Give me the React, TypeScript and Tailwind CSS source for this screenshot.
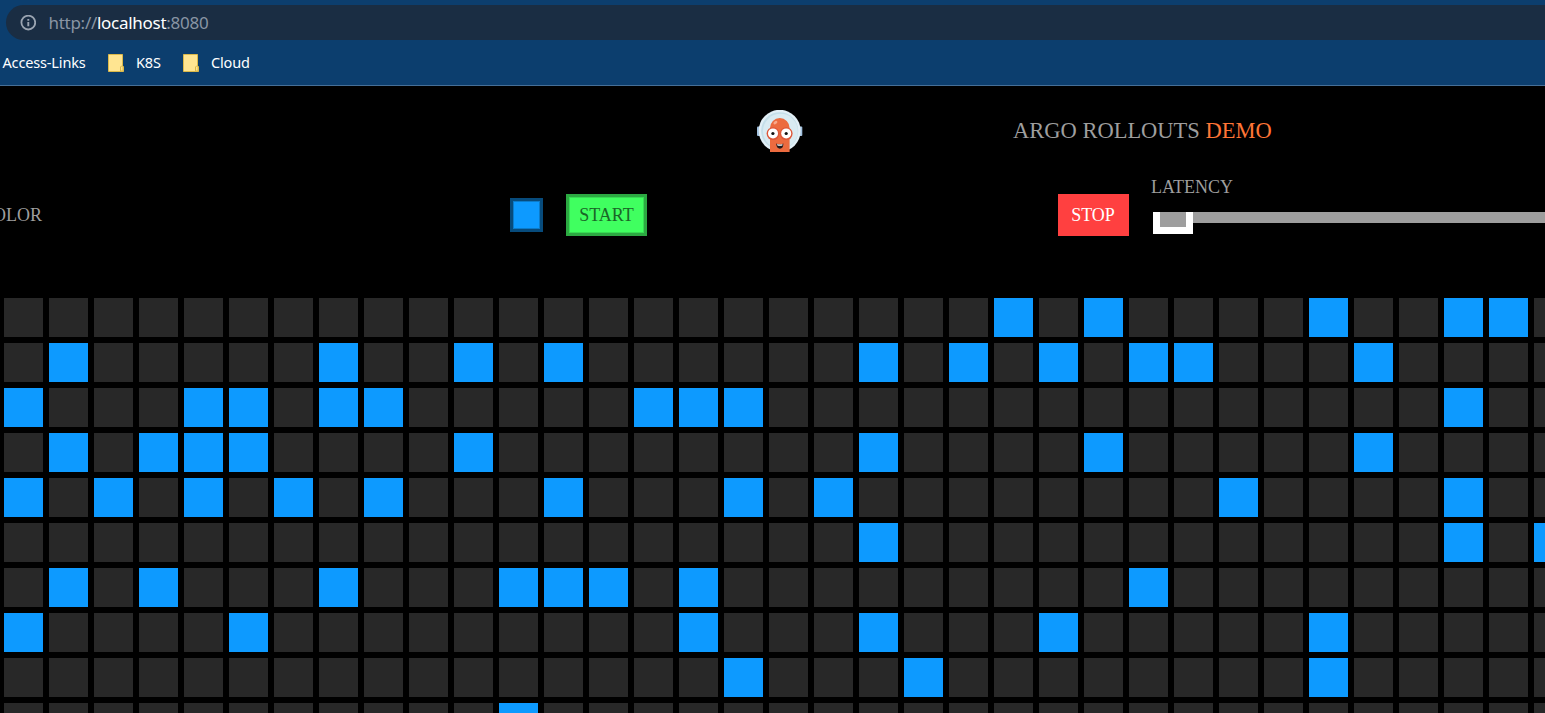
const COLUMNS = 35;

const ACTIVE: number[][] = [
  [22, 24, 29, 32, 33],
  [1, 7, 10, 12, 19, 21, 23, 25, 26, 30],
  [0, 4, 5, 7, 8, 14, 15, 16, 32],
  [1, 3, 4, 5, 10, 19, 24, 30],
  [0, 2, 4, 6, 8, 12, 16, 18, 27, 32],
  [19, 32, 34],
  [1, 3, 7, 11, 12, 13, 15, 25],
  [0, 5, 15, 19, 23, 29],
  [16, 20, 29],
  [11],
];

function InfoIcon() {
  return (
    <svg className="size-4 shrink-0" viewBox="0 0 16 16" fill="none">
      <circle cx="8.3" cy="7.6" r="6.9" stroke="#9ba5b2" strokeWidth="1.8" />
      <path d="M8.3 6.9v4.3M8.3 3.9v1.8" stroke="#9ba5b2" strokeWidth="1.9" />
    </svg>
  );
}

function FolderIcon() {
  return (
    <svg className="h-[18px] w-4 shrink-0" viewBox="0 0 16 18">
      <path d="M.5.5h14V12l1 .8v4.7H.5z" fill="#ffe591" stroke="#dcb94a" />
      <path d="M12.5 17v-4l1-1h1.5v5z" fill="#ffe591" stroke="#dcb94a" />
    </svg>
  );
}

function ArgoLogo() {
  return (
    <svg className="h-[42px] w-[46px] shrink-0" viewBox="0 0 46 42">
      <rect x="0" y="16.5" width="4" height="9.5" rx="1" fill="#a3c2df" />
      <rect x="41.3" y="16.5" width="4" height="9.5" rx="1" fill="#a3c2df" />
      <circle cx="22.7" cy="20.8" r="21" fill="#e3f0f7" />
      <circle cx="22.7" cy="20.8" r="18.6" fill="#c5dfe9" />
      <circle cx="23.4" cy="21.2" r="17.4" fill="#d9ebf2" />
      <path d="M13 42V18a9.8 10 0 0 1 19.6 0V42z" fill="#ec6b3f" />
      <ellipse cx="18.4" cy="12.6" rx="2.2" ry="1.4" fill="#f9a98a" transform="rotate(-35 18.4 12.6)" />
      <circle cx="16" cy="23.6" r="6.4" fill="#dd5739" />
      <circle cx="29.2" cy="23.6" r="6.4" fill="#dd5739" />
      <circle cx="16" cy="23.4" r="5" fill="#fff" />
      <circle cx="29.2" cy="23.4" r="5" fill="#fff" />
      <circle cx="15.9" cy="23.5" r="1.6" fill="#111" />
      <circle cx="29.2" cy="23.5" r="1.6" fill="#111" />
      <path d="M19.2 33.6q3.7 1.8 7.2 0q-.2 5.2-3.5 5.2t-3.7-5.2z" fill="#20191b" />
      <path d="M20.2 34.1q2.7 1 5.2 0v1.3q-2.5.8-5 0z" fill="#fff" />
    </svg>
  );
}

function BrowserBar() {
  return (
    <header className="h-[86px] border-b border-[#466f97] bg-[#0c3e6e] pt-[5px] font-['Noto_Sans',sans-serif]">
      <div className="ml-[6px] flex h-[35px] items-center rounded-l-full bg-[#1a2d43] pl-[14px]">
        <InfoIcon />
        <span className="ml-[12.5px] whitespace-nowrap text-[17px] tracking-[-0.28px] text-[#8995a4]">
          http://<span className="text-white">localhost</span>:8080
        </span>
      </div>
      <nav className="flex h-[45px] items-center whitespace-nowrap pl-[2.5px] text-[14.5px] tracking-[-0.15px] text-white">
        <span className="w-[105.5px]">Access-Links</span>
        <FolderIcon />
        <span className="ml-3 w-[47px]">K8S</span>
        <FolderIcon />
        <span className="ml-3">Cloud</span>
      </nav>
    </header>
  );
}

function Controls() {
  return (
    <section className="flex h-[122px] items-start text-[18px] leading-5 text-[#9e9e9e]">
      <div className="mt-[29px] flex w-[42px] shrink-0 justify-end">
        <span>COLOR</span>
      </div>
      <div className="ml-[468px] mt-[22px] h-[34px] w-[33px] shrink-0 border-[3px] border-[#074b7c] bg-[#0d9aff] shadow-[inset_0_0_0_1px_#0b7bca]" />
      <button className="ml-[23px] mt-[18px] flex h-[42px] w-[81px] shrink-0 items-center justify-center border-[3px] border-[#2ca942] bg-[#40ff60] text-[#1a6627] shadow-[inset_0_0_0_1px_#37dc53]">
        START
      </button>
      <button className="ml-[411px] mt-[18px] flex h-[42px] w-[71px] shrink-0 items-center justify-center bg-[#ff4040] pr-px text-white">
        STOP
      </button>
      <div className="ml-[22px] mt-px min-w-0 flex-1">
        <div>LATENCY</div>
        <div className="ml-0.5 mt-[15px] flex items-start">
          <div className="h-[22px] w-10 border-x-[7px] border-b-[7px] border-white bg-[#9e9e9e]" />
          <div className="h-[11px] flex-1 bg-[#9e9e9e]" />
        </div>
      </div>
    </section>
  );
}

export default function App() {
  return (
    <main className="h-[713px] w-[1545px] overflow-hidden bg-black font-['Liberation_Serif',serif]">
      <BrowserBar />
      <div className="flex h-[90px] items-center pl-[757px]">
        <ArgoLogo />
        <h1 className="ml-[210px] whitespace-nowrap text-[22.5px] leading-6 text-[#9e9e9e]">
          ARGO ROLLOUTS <span className="text-[#ff7536]">DEMO</span>
        </h1>
      </div>
      <Controls />
      <div className="flex flex-col gap-[6px] pl-1">
        {ACTIVE.map((active, row) => (
          <div key={row} className="flex gap-[6px]">
            {Array.from({ length: COLUMNS }, (_, column) => (
              <div
                key={column}
                className={`size-[39px] shrink-0 ${active.includes(column) ? "bg-[#0d9aff]" : "bg-[#282828]"}`}
              />
            ))}
          </div>
        ))}
      </div>
    </main>
  );
}
